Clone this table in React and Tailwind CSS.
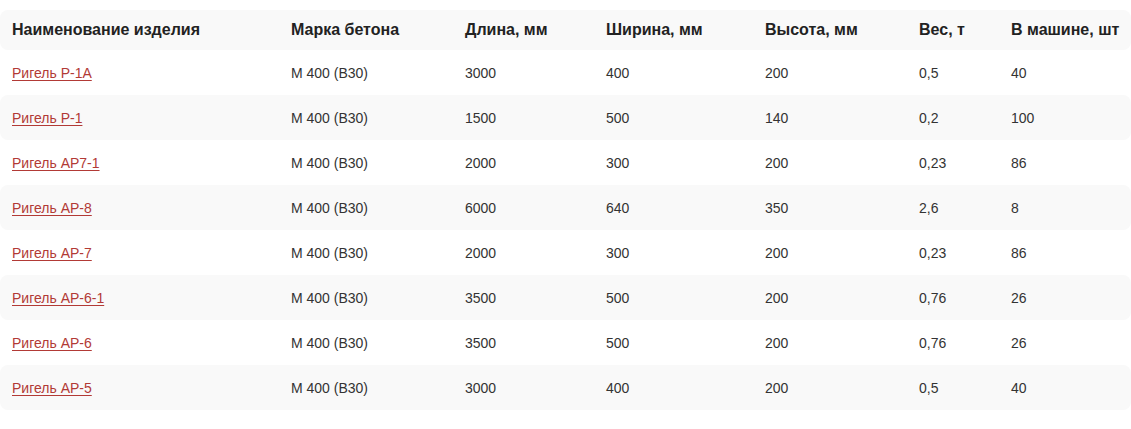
const rows = [
  ['Ригель Р-1А', 'М 400 (В30)', '3000', '400', '200', '0,5', '40'],
  ['Ригель Р-1', 'М 400 (В30)', '1500', '500', '140', '0,2', '100'],
  ['Ригель АР7-1', 'М 400 (В30)', '2000', '300', '200', '0,23', '86'],
  ['Ригель АР-8', 'М 400 (В30)', '6000', '640', '350', '2,6', '8'],
  ['Ригель АР-7', 'М 400 (В30)', '2000', '300', '200', '0,23', '86'],
  ['Ригель АР-6-1', 'М 400 (В30)', '3500', '500', '200', '0,76', '26'],
  ['Ригель АР-6', 'М 400 (В30)', '3500', '500', '200', '0,76', '26'],
  ['Ригель АР-5', 'М 400 (В30)', '3000', '400', '200', '0,5', '40'],
]

const head = ['Наименование изделия', 'Марка бетона', 'Длина, мм', 'Ширина, мм', 'Высота, мм', 'Вес, т', 'В машине, шт']

const cols = 'grid grid-cols-[279px_174px_141px_159px_154px_92px_1fr] items-center'

export default function App() {
  return (
    <div className="w-[1131px] h-[429px] bg-white pt-[10px] font-['Liberation_Sans',Arial,sans-serif]">
      <div className={`${cols} h-[40px] rounded-lg bg-[#f9f9f9] text-base font-bold text-[#222]`}>
        {head.map(h => (
          <div key={h} className="pl-3">{h}</div>
        ))}
      </div>
      {rows.map((r, i) => (
        <div key={r[0]} className={`${cols} h-[45px] rounded-lg text-sm text-[#333] ${i % 2 ? 'bg-[#f9f9f9]' : 'bg-white'}`}>
          <div className="pl-3">
            <a href="#" className="text-[#b23a36] underline underline-offset-2">{r[0]}</a>
          </div>
          {r.slice(1).map((c, j) => (
            <div key={j} className="pl-3">{c}</div>
          ))}
        </div>
      ))}
    </div>
  )
}
